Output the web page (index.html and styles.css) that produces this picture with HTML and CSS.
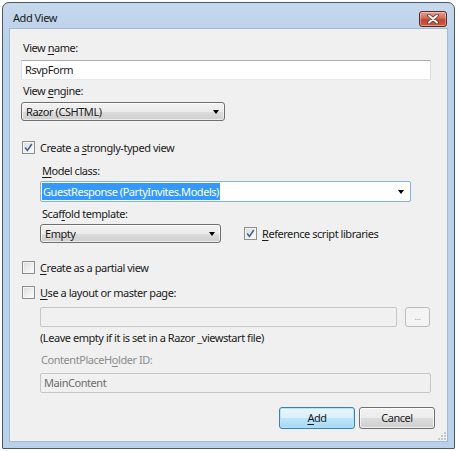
FILE: index.html
```html
<!DOCTYPE html>
<html lang="en">
<head>
    <meta charset="UTF-8">
    <title>Add View</title>
    <link rel="stylesheet" href="styles.css">
</head>
<body>
    <div class="window">
        <div class="titlebar">
            <span class="title">Add View</span>
            <span class="close">
                <svg width="14" height="10" viewBox="0 0 14 10">
                    <path d="M3 1.5 L11 8.5 M11 1.5 L3 8.5" stroke="#6b2a20" stroke-width="3.6" stroke-linecap="round"/>
                    <path d="M3 1.5 L11 8.5 M11 1.5 L3 8.5" stroke="#ffffff" stroke-width="2" stroke-linecap="round"/>
                </svg>
            </span>
        </div>
        <div class="content">
            <div class="label first">View <u>n</u>ame:</div>
            <div class="textbox name">RsvpForm</div>
            <div class="label gap3">View <u>e</u>ngine:</div>
            <div class="dropdown engine"><span>Razor (CSHTML)</span><span class="arrow"></span></div>

            <div class="check-row typed">
                <span class="box"><svg width="9" height="9" viewBox="0 0 9 9"><path d="M1.2 4.6 L3.4 7.4 L7.8 1" fill="none" stroke="#4a5f97" stroke-width="1.6"/></svg></span>
                <span>Create a <u>s</u>trongly-typed view</span>
            </div>
            <div class="indent">
                <div class="label model-label"><u>M</u>odel class:</div>
                <div class="combo"><span class="selected">GuestResponse (PartyInvites.Models)</span><span class="arrow"></span></div>
                <div class="label scaffold-label">Scaf<u>f</u>old template:</div>
                <div class="scaffold-row">
                    <div class="dropdown scaffold"><span>Empty</span><span class="arrow"></span></div>
                    <div class="check-row">
                        <span class="box"><svg width="9" height="9" viewBox="0 0 9 9"><path d="M1.2 4.6 L3.4 7.4 L7.8 1" fill="none" stroke="#4a5f97" stroke-width="1.6"/></svg></span>
                        <span><u>R</u>eference script libraries</span>
                    </div>
                </div>
            </div>

            <div class="check-row partial">
                <span class="box"></span>
                <span><u>C</u>reate as a partial view</span>
            </div>
            <div class="check-row layout">
                <span class="box"></span>
                <span><u>U</u>se a layout or master page:</span>
            </div>
            <div class="indent">
                <div class="layout-row">
                    <div class="textbox disabled layout-path"></div>
                    <div class="browse">...</div>
                </div>
                <div class="note">(Leave empty if it is set in a Razor _viewstart file)</div>
                <div class="label dim">ContentPlaceH<u>o</u>lder ID:</div>
                <div class="textbox disabled placeholder-id">MainContent</div>
            </div>

            <div class="buttons">
                <div class="btn default"><u>A</u>dd</div>
                <div class="btn">Cancel</div>
            </div>
            <div class="grip">
                <svg width="10" height="10" viewBox="0 0 10 10" fill="#c3c9d2">
                    <rect x="8" y="2" width="2" height="2"/>
                    <rect x="5" y="5" width="2" height="2"/><rect x="8" y="5" width="2" height="2"/>
                    <rect x="2" y="8" width="2" height="2"/><rect x="5" y="8" width="2" height="2"/><rect x="8" y="8" width="2" height="2"/>
                </svg>
            </div>
        </div>
    </div>
</body>
</html>
```

FILE: styles.css
```css
body {
    margin: 0;
    padding: 2px 0 0 2px;
    background-color: #ffffff;
    font-family: "Noto Sans", "Open Sans", sans-serif;
    font-size: 11px;
    letter-spacing: -0.45px;
    color: #1b1b1b;
}
u {
    text-decoration-thickness: 1px;
    text-underline-offset: 2px;
}
.window {
    box-sizing: border-box;
    width: 453px;
    height: 447px;
    border: 1px solid #4b5868;
    border-radius: 7px 7px 1px 1px;
    background: linear-gradient(#c6d8ec, #b9d1ea 40px);
    padding: 0 6px 6px 6px;
    display: flex;
    flex-direction: column;
}
.titlebar {
    height: 25px;
    display: flex;
    justify-content: space-between;
    align-items: flex-start;
}
.title {
    margin: 8px 0 0 4px;
    line-height: 14px;
    color: #1a1a1a;
}
.close {
    margin: 8px 1px 0 0;
    width: 26px;
    height: 14px;
    border: 1px solid #5b2a23;
    border-radius: 3px;
    background: linear-gradient(#e6a093, #d06a58 45%, #c1432f 55%, #cd5d45);
    box-shadow: inset 0 0 0 1px rgba(255, 255, 255, 0.35);
    display: flex;
    justify-content: center;
    align-items: center;
}
.content {
    flex: 1;
    position: relative;
    background-color: #f0f0f0;
    border: 1px solid #a6b9d0;
    padding: 11px 0 0 11px;
}
.label {
    height: 16px;
    line-height: 16px;
    padding-left: 2px;
}
.first { margin-top: 0; }
.gap3 { margin-top: 3px; }
.textbox {
    box-sizing: border-box;
    height: 20px;
    line-height: 18px;
    padding-left: 3px;
    background-color: #ffffff;
    border: 1px solid #dbdfe6;
    border-top-color: #abadb3;
    border-bottom-color: #e3e9ef;
}
.name {
    width: 410px;
    margin-top: 4px;
}
.dropdown {
    box-sizing: border-box;
    height: 19px;
    padding: 0 5px 0 4px;
    border: 1px solid #707070;
    border-radius: 3px;
    background: linear-gradient(#f2f2f2, #ebebeb 50%, #dddddd 50%, #cfcfcf);
    box-shadow: inset 0 0 0 1px rgba(255, 255, 255, 0.6);
    display: flex;
    justify-content: space-between;
    align-items: center;
}
.arrow {
    width: 0;
    height: 0;
    border-left: 3.5px solid transparent;
    border-right: 3.5px solid transparent;
    border-top: 4px solid #000000;
}
.engine {
    width: 204px;
    margin-top: 3px;
}
.check-row {
    height: 16px;
    display: flex;
    align-items: center;
    gap: 5px;
}
.box {
    box-sizing: border-box;
    width: 13px;
    height: 13px;
    border: 1px solid #8e8f8f;
    background: linear-gradient(135deg, #d6d9de, #f7f7f7 75%);
    box-shadow: inset 0 0 0 1px #f4f4f4;
    display: flex;
    justify-content: center;
    align-items: center;
}
.typed {
    margin: 18px 0 0 1px;
}
.indent {
    padding-left: 19px;
}
.model-label { margin-top: 8px; }
.combo {
    box-sizing: border-box;
    width: 371px;
    height: 21px;
    margin-top: 2px;
    padding: 0 6px 0 1px;
    background-color: #ffffff;
    border: 1px solid #7eb4ea;
    border-radius: 2px;
    display: flex;
    justify-content: space-between;
    align-items: center;
}
.selected {
    background-color: #3399ff;
    color: #ffffff;
    padding: 0 1px;
    line-height: 17px;
}
.scaffold-label { margin-top: 4px; }
.scaffold-row {
    margin-top: 2px;
    display: flex;
    align-items: center;
    gap: 23px;
}
.scaffold {
    width: 181px;
}
.partial {
    margin: 16px 0 0 1px;
}
.layout {
    margin: 9px 0 0 1px;
}
.layout-row {
    margin-top: 7px;
    display: flex;
    gap: 8px;
}
.disabled {
    background-color: #f0f0f0;
    border: 1px solid #c6c6c6;
    border-radius: 2px;
    color: #6d6d6d;
}
.layout-path {
    width: 357px;
}
.browse {
    box-sizing: border-box;
    width: 25px;
    height: 20px;
    border: 1px solid #bcbcbc;
    border-radius: 3px;
    background-color: #f4f4f4;
    color: #a0a0a0;
    font-size: 9px;
    text-align: center;
    line-height: 17px;
}
.note {
    margin-top: 3px;
    height: 16px;
    line-height: 16px;
}
.dim {
    margin-top: 6px;
    color: #8d8d8d;
    padding-left: 1px;
}
.placeholder-id {
    width: 391px;
    margin-top: 5px;
}
.buttons {
    margin: 14px 0 0 258px;
    display: flex;
    gap: 4px;
}
.btn {
    box-sizing: border-box;
    width: 76px;
    height: 22px;
    border: 1px solid #707070;
    border-radius: 3px;
    background: linear-gradient(#f2f2f2, #ebebeb 50%, #dddddd 50%, #cfcfcf);
    box-shadow: inset 0 0 0 1px rgba(255, 255, 255, 0.7);
    text-align: center;
    line-height: 20px;
}
.default {
    border-color: #3c7fb1;
    background: linear-gradient(#eaf6fd, #d9f0fc 50%, #bee6fd 50%, #a7d9f5);
    box-shadow: inset 0 0 0 1px #b2e4fc;
}
.grip {
    position: absolute;
    right: 1px;
    bottom: 1px;
    line-height: 0;
}
```
